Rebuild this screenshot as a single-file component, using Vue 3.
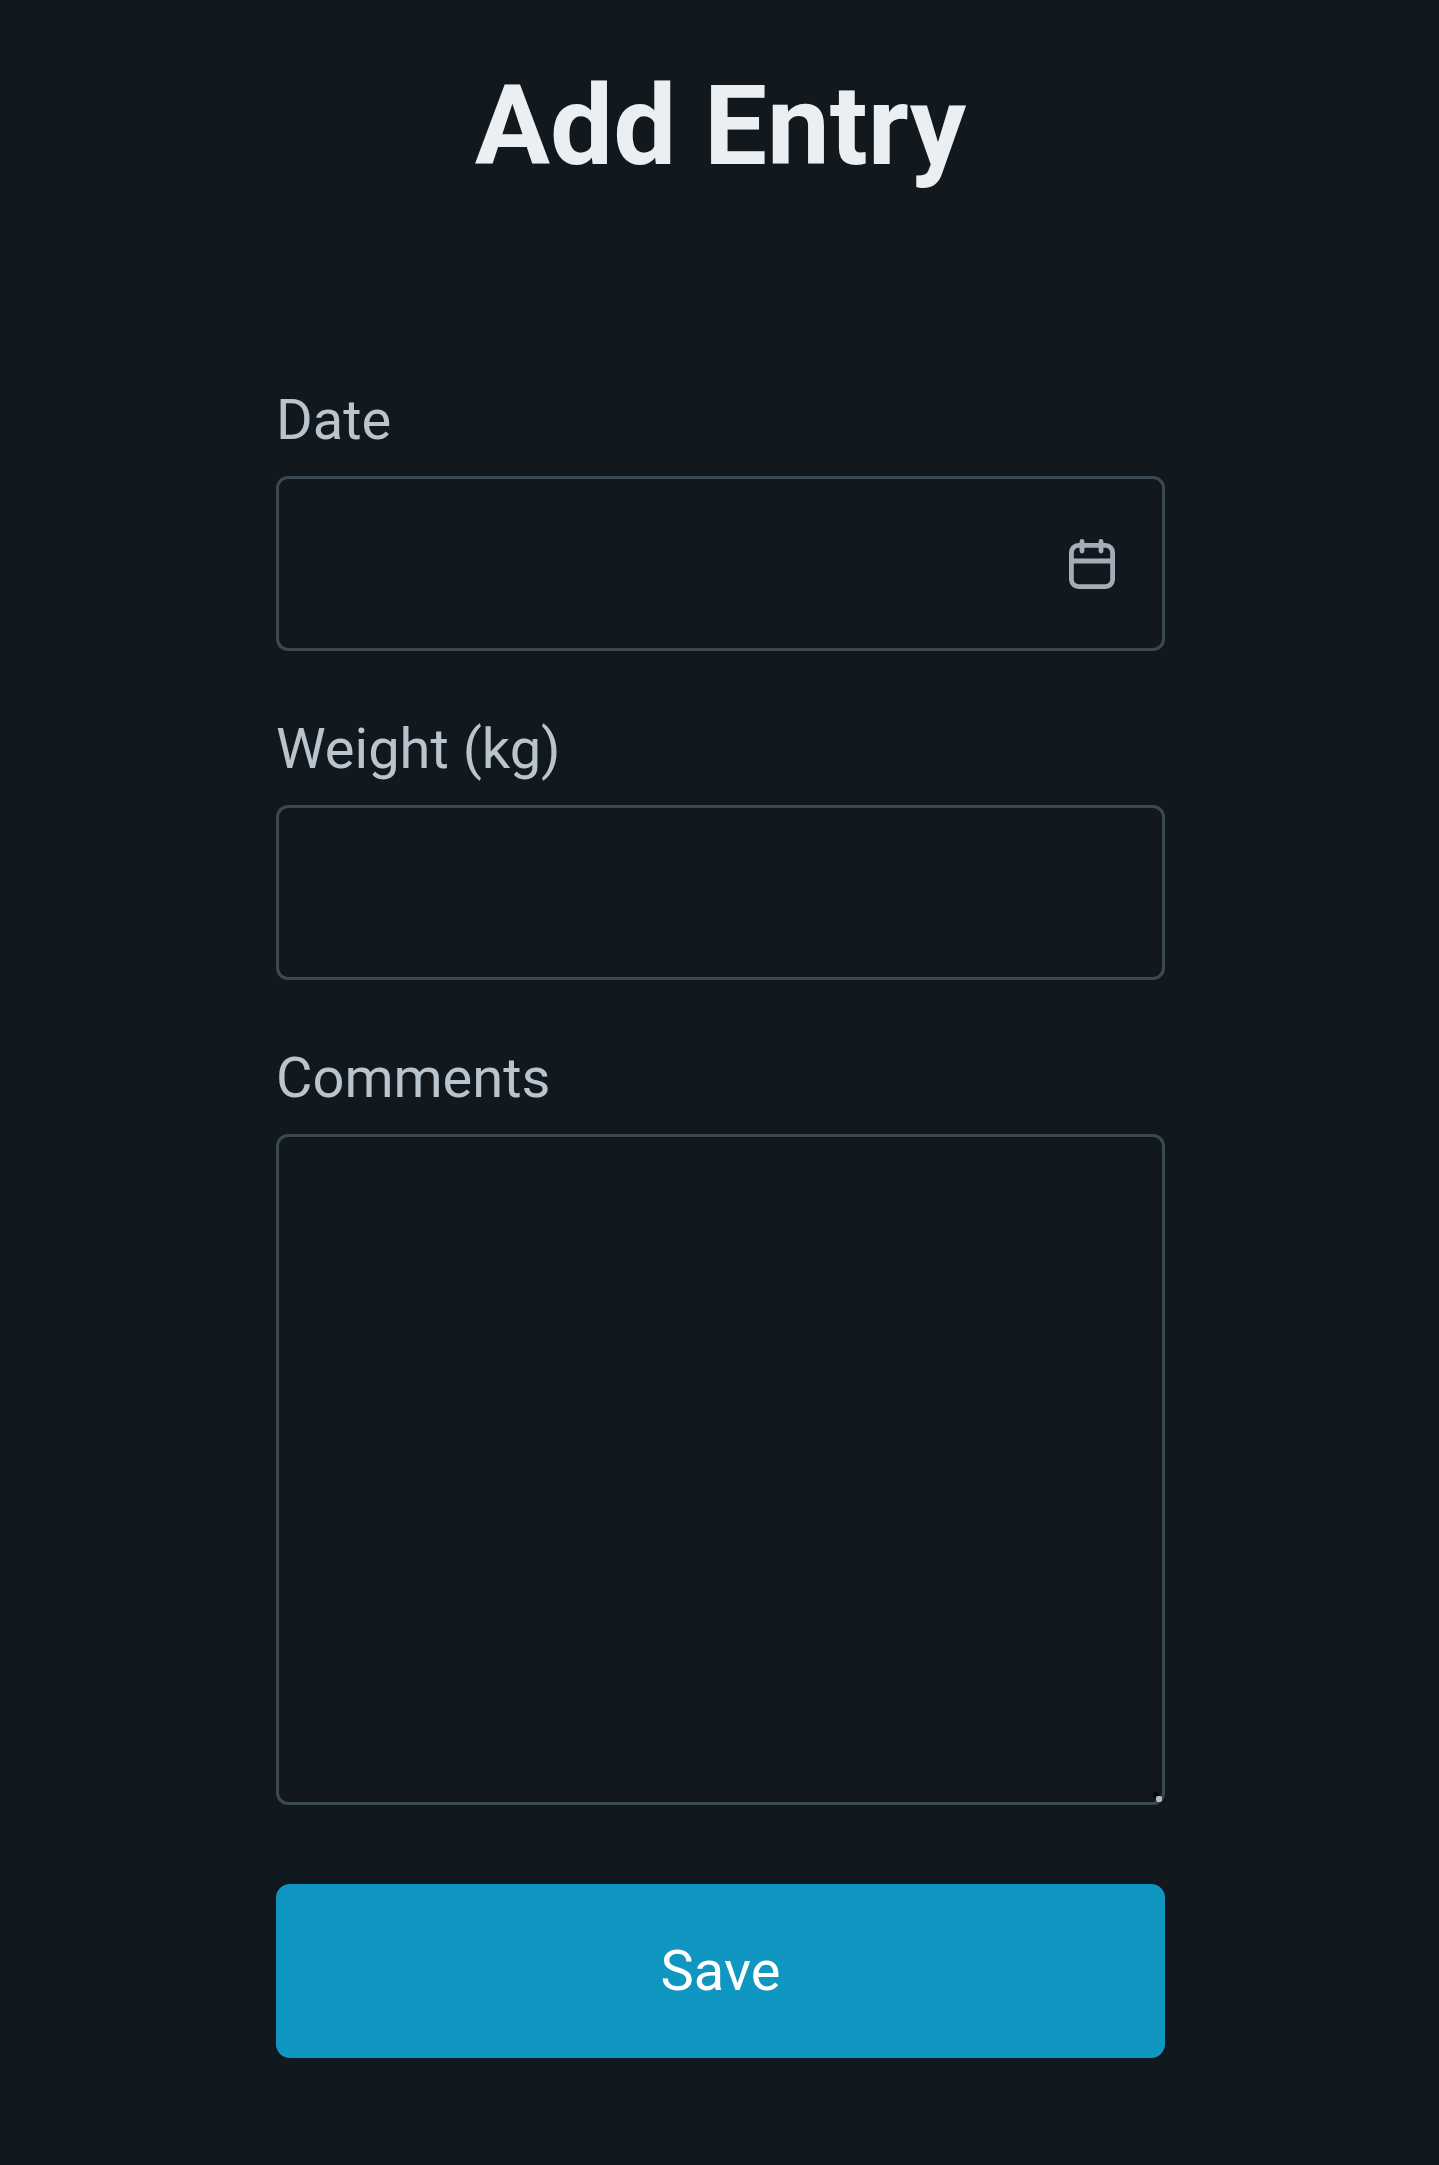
<script setup>
import { ref } from 'vue';

const date = ref('');
const weight = ref('');
const comments = ref('');
</script>

<template>
  <div class="page">
    <h1 class="title">Add Entry</h1>
    <form class="form" @submit.prevent>
      <div class="field">
        <label class="label" for="date">Date</label>
        <div class="input-wrap">
          <input id="date" v-model="date" class="input" type="text" />
          <svg class="date-icon" viewBox="0 0 46 50" fill="none" stroke="currentColor" stroke-width="4.8" stroke-linecap="round">
            <rect x="2.4" y="6.4" width="41.2" height="41.2" rx="7" />
            <path d="M2.4 22h41.2" />
            <path d="M13 2.4v9.6" />
            <path d="M32 2.4v9.6" />
          </svg>
        </div>
      </div>
      <div class="field">
        <label class="label" for="weight">Weight (kg)</label>
        <input id="weight" v-model="weight" class="input" type="text" />
      </div>
      <div class="field">
        <label class="label" for="comments">Comments</label>
        <div class="input-wrap">
          <textarea id="comments" v-model="comments" class="input textarea"></textarea>
          <span class="grip-shadow"></span>
          <span class="grip"></span>
        </div>
      </div>
      <button class="save" type="submit">Save</button>
    </form>
  </div>
</template>

<style scoped>
.page {
  min-height: 2165px;
  box-sizing: border-box;
  padding: 56px 0 0 2px;
  background: #11191f;
  font-family: Roboto, "Liberation Sans", sans-serif;
}

.title {
  margin: 0 0 190px;
  font-size: 112px;
  line-height: 140px;
  font-weight: 700;
  text-align: center;
  color: #eceff1;
}

.form {
  width: 889px;
  margin: 0 auto;
}

.field {
  margin-bottom: 64px;
}

.label {
  display: block;
  margin-bottom: 22px;
  font-size: 56px;
  line-height: 68px;
  color: #b8c4ce;
}

.input-wrap {
  position: relative;
}

.date-icon {
  position: absolute;
  top: 50%;
  right: 50px;
  width: 46px;
  height: 50px;
  transform: translateY(-50%);
  color: #a3aeb8;
}

.input {
  display: block;
  width: 100%;
  height: 175px;
  box-sizing: border-box;
  padding: 0 36px;
  background: transparent;
  border: 3px solid #394a55;
  border-radius: 12px;
  outline: none;
  font: inherit;
  font-size: 56px;
  color: #eceff1;
}

.textarea {
  height: 671px;
  padding: 24px 36px;
  resize: none;
}

/* mobile style resize corner */
.grip-shadow {
  position: absolute;
  right: 6px;
  bottom: 7px;
  width: 6px;
  height: 6px;
  border-radius: 50%;
  background: #050709;
}

.grip {
  position: absolute;
  right: 3px;
  bottom: 3px;
  width: 6px;
  height: 6px;
  border-radius: 2px;
  background: #b4bdc4;
}

.save {
  display: block;
  width: 100%;
  height: 174px;
  margin-top: 79px;
  border: none;
  border-radius: 14px;
  background: #0f96c1;
  font: inherit;
  font-size: 56px;
  color: #fff;
}
</style>

<style>
body {
  background: #11191f;
}
</style>
